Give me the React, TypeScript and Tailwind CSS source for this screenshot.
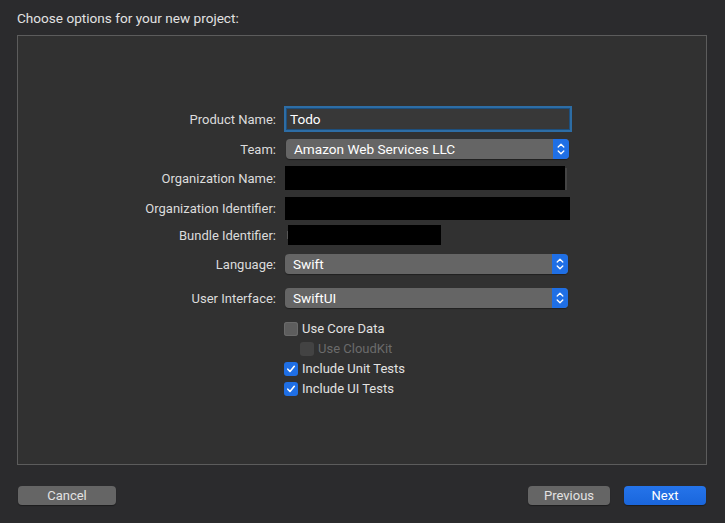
import React from "react";

const font = { fontFamily: "Roboto, 'Noto Sans', 'Liberation Sans', sans-serif" };

function Stepper() {
  return (
    <div className="flex h-full w-[16px] flex-col items-center justify-center rounded-r-[4px] bg-[#1f6fe5]">
      <svg width="8" height="14" viewBox="0 0 8 14" fill="none">
        <path d="M1.2 5 L4 2.2 L6.8 5" stroke="white" strokeWidth="1.3" strokeLinecap="round" strokeLinejoin="round" />
        <path d="M1.2 9 L4 11.8 L6.8 9" stroke="white" strokeWidth="1.3" strokeLinecap="round" strokeLinejoin="round" />
      </svg>
    </div>
  );
}

function Popup({ text }: { text: string }) {
  return (
    <div className="flex h-[20px] w-[283px] items-stretch rounded-[4px] bg-[#656565] shadow-[0_1px_1px_rgba(0,0,0,0.35)]">
      <div className="flex flex-1 items-center pl-[8px] text-[13.6px] text-white">{text}</div>
      <Stepper />
    </div>
  );
}

function Label({ children }: { children: React.ReactNode }) {
  return (
    <div className="w-[258px] shrink-0 text-right text-[13px] leading-none text-[#dcdcdc]">{children}</div>
  );
}

function Check({ checked, disabled }: { checked?: boolean; disabled?: boolean }) {
  if (checked) {
    return (
      <div className="flex h-[14px] w-[14px] items-center justify-center rounded-[3px] bg-[#1f6fe5]">
        <svg width="10" height="10" viewBox="0 0 10 10" fill="none">
          <path d="M1.8 5.2 L4 7.5 L8.3 2.3" stroke="white" strokeWidth="1.6" strokeLinecap="round" strokeLinejoin="round" />
        </svg>
      </div>
    );
  }
  return (
    <div
      className={
        disabled
          ? "h-[14px] w-[14px] rounded-[3px] bg-[#434343]"
          : "h-[14px] w-[14px] rounded-[3px] bg-[#5d5d5d] shadow-[inset_0_0_0_1px_#6a6a6a]"
      }
    />
  );
}

function CheckRow({
  label,
  checked,
  disabled,
  indent,
}: {
  label: string;
  checked?: boolean;
  disabled?: boolean;
  indent?: boolean;
}) {
  return (
    <div className={"flex h-[20px] items-center gap-[4px] " + (indent ? "pl-[282px]" : "pl-[266px]")}>
      <Check checked={checked} disabled={disabled} />
      <span className={"text-[13px] " + (disabled ? "text-[#6b6b6b]" : "text-[#e2e2e2]")}>{label}</span>
    </div>
  );
}

export default function App() {
  return (
    <div className="flex h-[523px] w-[725px] flex-col bg-[#2b2b2d] px-[17px]" style={font}>
      <div className="pt-[10px] text-[13.6px] leading-[16px] text-[#e2e2e2]">Choose options for your new project:</div>
      <div className="mt-[9px] flex h-[430px] w-[690px] flex-col border border-[#5c5c5c] bg-[#313131]">
        {/* Product Name */}
        <div className="mt-[70px] flex h-[26px] items-center">
          <Label>Product Name:</Label>
          <div className="ml-[11px] flex h-[20px] w-[282px] items-center bg-[#383838] pl-[3px] text-[13.6px] text-white shadow-[0_0_0_1px_#1d4f7d,0_0_0_3px_#2d6da5]">
            Todo
          </div>
        </div>
        {/* Team */}
        <div className="mt-[7px] flex h-[20px] items-center">
          <Label>Team:</Label>
          <div className="ml-[10px]">
            <Popup text="Amazon Web Services LLC" />
          </div>
        </div>
        {/* Org name */}
        <div className="mt-[7px] flex h-[24px] items-center">
          <Label>Organization Name:</Label>
          <div className="ml-[9px] flex h-[24px] items-stretch">
            <div className="w-[280px] bg-black" />
            <div className="mt-[2px] w-[2px] bg-[#444444]" />
          </div>
        </div>
        {/* Org identifier */}
        <div className="mt-[7px] flex h-[23px] items-center">
          <Label>Organization Identifier:</Label>
          <div className="ml-[9px] h-[23px] w-[285px] bg-black" />
        </div>
        {/* Bundle */}
        <div className="mt-[5px] flex h-[20px] items-center">
          <Label>Bundle Identifier:</Label>
          <div className="ml-[11px] h-[8px] w-[1px] bg-[#555555]" />
          <div className="h-[20px] w-[153px] bg-black" />
        </div>
        {/* Language */}
        <div className="mt-[9px] flex h-[20px] items-center">
          <Label>Language:</Label>
          <div className="ml-[9px]">
            <Popup text="Swift" />
          </div>
        </div>
        {/* UI */}
        <div className="mt-[14px] flex h-[20px] items-center">
          <Label>User Interface:</Label>
          <div className="ml-[9px]">
            <Popup text="SwiftUI" />
          </div>
        </div>
        <div className="mt-[11px] flex flex-col">
          <CheckRow label="Use Core Data" />
          <CheckRow label="Use CloudKit" disabled indent />
          <CheckRow label="Include Unit Tests" checked />
          <CheckRow label="Include UI Tests" checked />
        </div>
      </div>
      <div className="mt-[21px] flex items-center">
        <button className="ml-[1px] flex h-[19px] w-[98px] items-center justify-center rounded-[4px] bg-[#656565] text-[13px] text-[#e2e2e2] shadow-[0_1px_1px_rgba(0,0,0,0.35)]">
          Cancel
        </button>
        <div className="flex-1" />
        <button className="flex h-[19px] w-[82px] items-center justify-center rounded-[4px] bg-[#656565] text-[13px] text-[#e2e2e2] shadow-[0_1px_1px_rgba(0,0,0,0.35)]">
          Previous
        </button>
        <button className="ml-[14px] mr-[2px] flex h-[19px] w-[82px] items-center justify-center rounded-[4px] bg-[linear-gradient(#2574ea,#1a66dc)] text-[13px] text-white shadow-[0_1px_1px_rgba(0,0,0,0.35)]">
          Next
        </button>
      </div>
    </div>
  );
}
